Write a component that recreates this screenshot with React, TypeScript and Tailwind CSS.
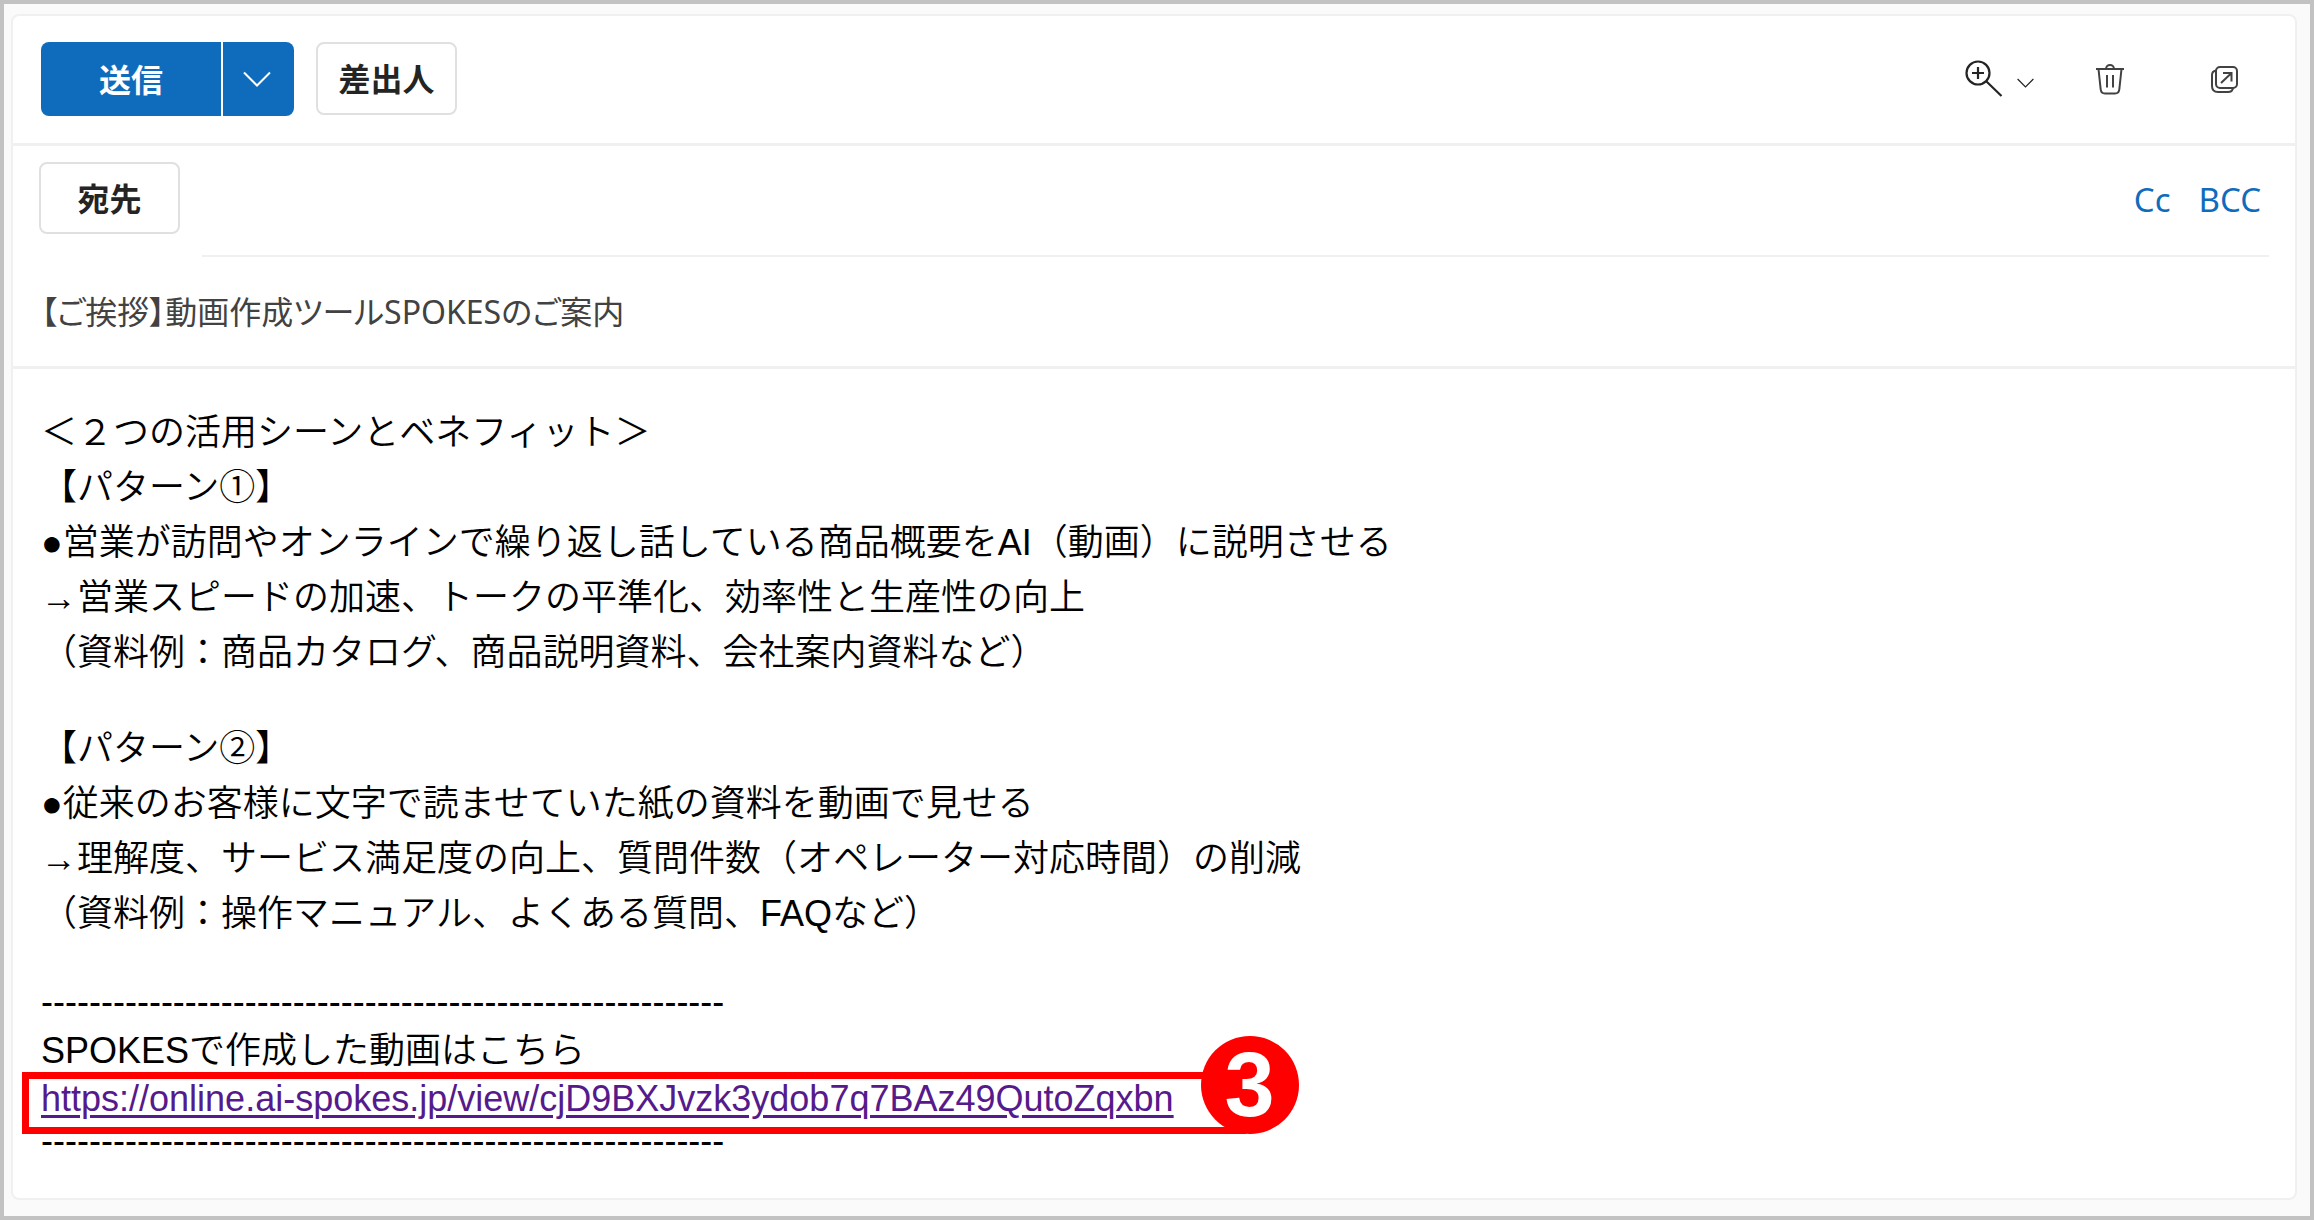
import React from "react";

const patternOne = [
  "【パターン①】",
  "●営業が訪問やオンラインで繰り返し話している商品概要をAI（動画）に説明させる",
  "→営業スピードの加速、トークの平準化、効率性と生産性の向上",
  "（資料例：商品カタログ、商品説明資料、会社案内資料など）",
];

const patternTwo = [
  "【パターン②】",
  "●従来のお客様に文字で読ませていた紙の資料を動画で見せる",
  "→理解度、サービス満足度の向上、質問件数（オペレーター対応時間）の削減",
  "（資料例：操作マニュアル、よくある質問、FAQなど）",
];

const rule = "-".repeat(57);

function Chevron({ className }: { className: string }) {
  return (
    <svg viewBox="0 0 28 16" className={className} fill="none" stroke="currentColor" aria-hidden="true">
      <path d="M1 1.5 14 14.5 27 1.5" strokeWidth="2" />
    </svg>
  );
}

function ZoomIcon() {
  return (
    <svg width="38" height="38" viewBox="0 0 38 38" fill="none" stroke="currentColor" strokeWidth="2.2" aria-hidden="true">
      <circle cx="13" cy="13" r="11.5" />
      <path d="M13 7v12M7 13h12M21.5 21.5 36.5 36" />
    </svg>
  );
}

function TrashIcon() {
  return (
    <svg width="30" height="32" viewBox="0 0 30 32" fill="none" stroke="currentColor" strokeWidth="2" aria-hidden="true">
      <path d="M1 6h28M11 6c0-5.500 8-5.500 8 0M3.500 6l2.200 20.500c.3 2.500 1.800 4 4.300 4h10c2.500 0 4-1.500 4.300-4L26.500 6M12 12v12.500M18 12v12.500" />
    </svg>
  );
}

function PopOutIcon() {
  return (
    <svg width="27" height="27" viewBox="0 0 27 27" fill="none" stroke="currentColor" strokeWidth="2" aria-hidden="true">
      <rect x="5" y="1" width="21" height="21" rx="4" />
      <path d="M5 4.500C2.500 5 1 6.500 1 9v11c0 3.500 2 6 6 6h10c2.500 0 4.500-1 5-4M10 17 20 7.500M12 7h8.500v8.500" />
    </svg>
  );
}

export default function App() {
  return (
    <main className="flex min-h-screen flex-col border-4 border-[#c2c2c2] bg-[#fafafa] pt-2.5 pr-[13px] pb-4 pl-[7px] font-['Liberation_Sans','Noto_Sans_CJK_JP',sans-serif]">
      <section className="flex grow flex-col rounded-lg border-2 border-[#f0f0f0] bg-white">
        <header className="flex items-center justify-between border-b-3 border-[#f0f0f0] pt-[26px] pr-[57px] pb-[27px] pl-7 text-[#242424]">
          <div className="flex items-start gap-[22px] font-['Noto_Sans_CJK_JP',sans-serif] text-[32px] font-bold">
            <div className="flex h-[74px] gap-0.5 text-white">
              <button className="w-[180px] rounded-l-lg bg-[#0f6cbd] pb-0.5">送信</button>
              <button aria-label="送信オプション" className="flex w-[71px] items-center justify-center rounded-r-lg bg-[#0f6cbd] pr-1">
                <Chevron className="h-4 w-7" />
              </button>
            </div>
            <button className="h-[73px] w-[141px] rounded-lg border-2 border-[#e0e0e0] pb-1">差出人</button>
          </div>
          <div className="flex items-center">
            <button aria-label="ズーム" className="flex items-center gap-3.5">
              <ZoomIcon />
              <Chevron className="mt-2 h-[10px] w-[17px]" />
            </button>
            <button aria-label="破棄" className="ml-[61px] text-[#424242]">
              <TrashIcon />
            </button>
            <button aria-label="新しいウィンドウで開く" className="ml-[86px] text-[#424242]">
              <PopOutIcon />
            </button>
          </div>
        </header>

        <div className="flex items-start pt-4 pr-[26px] pl-[26px]">
          <button className="h-[72px] w-[141px] shrink-0 rounded-lg border-2 border-[#e0e0e0] pb-0.5 font-['Noto_Sans_CJK_JP',sans-serif] text-[32px] font-bold text-[#242424]">
            宛先
          </button>
          <div className="ml-[22px] flex h-[95px] grow items-start gap-7 border-b-2 border-[#f0f0f0] pt-4 pr-2 font-['Noto_Sans',sans-serif] text-[33px] leading-[44px] text-[#0f6cbd]">
            <input aria-label="宛先" className="min-w-0 grow outline-none" />
            <button>Cc</button>
            <button>BCC</button>
          </div>
        </div>

        <div className="border-b-3 border-[#f0f0f0] px-7 pt-7 pb-[31px]">
          <input
            aria-label="件名"
            defaultValue="【ご挨拶】動画作成ツールSPOKESのご案内"
            className="h-[50px] w-full font-['Noto_Sans','Noto_Sans_CJK_JP',sans-serif] text-[32px] text-[#424242] outline-none [font-feature-settings:'palt']"
          />
        </div>

        <article className="px-7 pt-9 text-4xl leading-[55px] font-[350] whitespace-nowrap text-black">
          <p>＜２つの活用シーンとベネフィット＞</p>
          {patternOne.map((line) => (
            <p key={line}>{line}</p>
          ))}
          <div className="mt-[41px]">
            {patternTwo.map((line) => (
              <p key={line}>{line}</p>
            ))}
          </div>
          <p className="mt-10 leading-[42px]">{rule}</p>
          <p>SPOKESで作成した動画はこちら</p>
          <div className="relative w-fit leading-[42px]">
            <a
              href="https://online.ai-spokes.jp/view/cjD9BXJvzk3ydob7q7BAz49QutoZqxbn"
              className="text-[#551a8b] underline decoration-[3px] underline-offset-4"
            >
              https://online.ai-spokes.jp/view/cjD9BXJvzk3ydob7q7BAz49QutoZqxbn
            </a>
            <div className="pointer-events-none absolute -top-1.5 -right-[72px] -left-[19px] h-[62px] border-[7px] border-[#ff0000]" />
            <div className="absolute -top-[42px] -right-[125px] flex size-[98px] items-center justify-center rounded-full bg-[#ff0000] text-[90px] leading-none font-bold text-white">
              3
            </div>
          </div>
          <p className="leading-[42px]">{rule}</p>
        </article>
      </section>
    </main>
  );
}
